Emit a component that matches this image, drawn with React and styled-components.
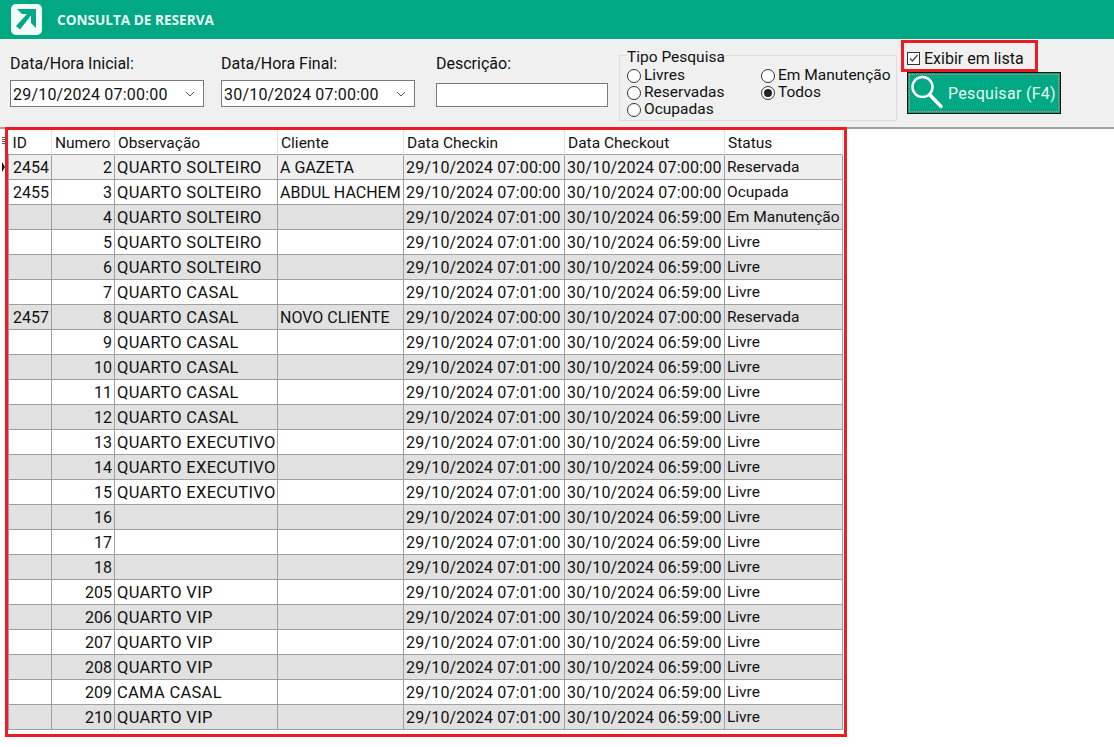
import React from "react";
import styled, { createGlobalStyle } from "styled-components";

const GlobalStyle = createGlobalStyle`
  html, body { margin: 0; padding: 0; background: #fff; }
  body { font-family: Roboto, "Open Sans", "Liberation Sans", sans-serif; font-size: 16px; color: #111; }
`;

const FREE_IN = "29/10/2024 07:01:00";
const FREE_OUT = "30/10/2024 06:59:00";
const IN = "29/10/2024 07:00:00";
const OUT = "30/10/2024 07:00:00";

const free = (numero, obs) => ({ id: "", numero, obs, cliente: "", checkin: FREE_IN, checkout: FREE_OUT, status: "Livre" });

const rooms = [
  { id: "2454", numero: 2, obs: "QUARTO SOLTEIRO", cliente: "A GAZETA", checkin: IN, checkout: OUT, status: "Reservada" },
  { id: "2455", numero: 3, obs: "QUARTO SOLTEIRO", cliente: "ABDUL HACHEM", checkin: IN, checkout: OUT, status: "Ocupada" },
  { ...free(4, "QUARTO SOLTEIRO"), status: "Em Manutenção" },
  free(5, "QUARTO SOLTEIRO"),
  free(6, "QUARTO SOLTEIRO"),
  free(7, "QUARTO CASAL"),
  { id: "2457", numero: 8, obs: "QUARTO CASAL", cliente: "NOVO CLIENTE", checkin: IN, checkout: OUT, status: "Reservada" },
  free(9, "QUARTO CASAL"),
  free(10, "QUARTO CASAL"),
  free(11, "QUARTO CASAL"),
  free(12, "QUARTO CASAL"),
  free(13, "QUARTO EXECUTIVO"),
  free(14, "QUARTO EXECUTIVO"),
  free(15, "QUARTO EXECUTIVO"),
  free(16, ""),
  free(17, ""),
  free(18, ""),
  free(205, "QUARTO VIP"),
  free(206, "QUARTO VIP"),
  free(207, "QUARTO VIP"),
  free(208, "QUARTO VIP"),
  free(209, "CAMA CASAL"),
  free(210, "QUARTO VIP"),
];

const Page = styled.div`
  width: 1114px;
  height: 747px;
  overflow: hidden;
  background: #fff;
`;

const TitleBar = styled.header`
  height: 39px;
  background: #00a884;
  display: flex;
  align-items: center;
  gap: 15px;
  padding-left: 11px;
`;

const Title = styled.h1`
  margin: 0;
  font-family: "Open Sans", sans-serif;
  font-size: 13.6px;
  font-weight: 700;
  color: #e8f8f3;
`;

const Toolbar = styled.section`
  height: 90px;
  box-sizing: border-box;
  background: #f0f0f0;
  border-bottom: 2px solid #a0a0a0;
  padding-left: 10px;
  display: flex;
  align-items: flex-start;
`;

const Field = styled.div`
  width: ${(p) => p.$width}px;
  margin-right: ${(p) => p.$gap}px;
  padding-top: 15px;
  display: flex;
  flex-direction: column;
`;

const Label = styled.label`
  line-height: 20px;
  margin-bottom: ${(p) => p.$gap}px;
`;

const DateBox = styled.div`
  height: 27px;
  box-sizing: border-box;
  background: #fff;
  border: 1px solid #7a7a7a;
  padding: 1px 8px 0 2px;
  letter-spacing: 0.2px;
  display: flex;
  align-items: center;
  justify-content: space-between;
`;

const TextBox = styled.div`
  height: 24px;
  box-sizing: border-box;
  background: #fff;
  border: 1px solid #7a7a7a;
`;

const GroupBox = styled.fieldset`
  width: 278px;
  height: 73px;
  box-sizing: border-box;
  margin: 9px 4px 0 1px;
  padding: 5px 0 0 7px;
  border: 1px solid #dcdcdc;
  display: grid;
  grid-template-columns: 134px 1fr;
  grid-auto-rows: 17px;
  font-size: 15.5px;
  line-height: 17px;
`;

const Legend = styled.legend`
  padding: 0;
  line-height: 14px;
  transform: translateY(2px);
`;

const Radio = styled.div`
  display: flex;
  align-items: center;
  gap: 3px;
  grid-column: ${(p) => p.$col};
  grid-row: ${(p) => p.$row};
`;

const RadioDot = styled.span`
  width: 14px;
  height: 14px;
  box-sizing: border-box;
  border: 1px solid #333;
  border-radius: 50%;
  background: #fff;
  display: flex;
  align-items: center;
  justify-content: center;
  &::after {
    content: "";
    width: 8px;
    height: 8px;
    border-radius: 50%;
    background: ${(p) => (p.$on ? "#222" : "transparent")};
  }
`;

const SideColumn = styled.div`
  width: 160px;
  display: flex;
  flex-direction: column;
  align-items: flex-start;
  padding-top: 1px;
`;

const ListToggle = styled.div`
  width: 137px;
  height: 32px;
  box-sizing: border-box;
  border: 3px solid #ed1c24;
  display: flex;
  align-items: center;
  gap: 4px;
  padding: 4px 0 0 3px;
`;

const CheckBox = styled.span`
  width: 13px;
  height: 13px;
  box-sizing: border-box;
  border: 1px solid #333;
  background: #fff;
  display: flex;
`;

const SearchButton = styled.button`
  width: 154px;
  height: 42px;
  margin-left: 6px;
  box-sizing: border-box;
  background: #00a884;
  border: 1px solid #111;
  padding: 0 0 0 2px;
  color: #e8f8f3;
  font-family: inherit;
  font-size: 16px;
  letter-spacing: 0.3px;
  white-space: nowrap;
  display: flex;
  align-items: center;
  gap: 2px;
  outline: 1px dotted #f07a8a;
  outline-offset: -3px;
`;

const TableFrame = styled.div`
  width: 842px;
  height: 610px;
  margin-top: -2px;
  margin-left: 5px;
  box-sizing: border-box;
  border: 3px solid #ed1c24;
  position: relative;
`;

const GridTable = styled.table`
  width: 834px;
  table-layout: fixed;
  border-collapse: collapse;
`;

const HeadCell = styled.th`
  height: 22px;
  padding: 2px 0 0 3px;
  font-size: 15.5px;
  line-height: 22px;
  font-weight: 400;
  text-align: left;
  white-space: nowrap;
  overflow: hidden;
  border-right: 1px solid #e3e3e3;
  &:first-child {
    padding-left: 4px;
  }
`;

const Row = styled.tr`
  background: ${(p) => p.$bg};
`;

const Cell = styled.td`
  height: 23px;
  padding: 1px 2px 0;
  line-height: 23px;
  text-align: ${(p) => (p.$right ? "right" : "left")};
  white-space: nowrap;
  overflow: hidden;
  border: 1px solid #a0a0a0;
  &:first-child {
    padding-left: 4px;
  }
`;

const RoomCell = styled(Cell)`
  font-size: 16.5px;
  letter-spacing: 0.3px;
`;

const DateCell = styled(Cell)`
  letter-spacing: 0.2px;
`;

const StatusCell = styled(Cell)`
  font-size: 15.5px;
`;

const RowMarker = styled.span`
  position: absolute;
  left: -6px;
  top: 32px;
  width: 0;
  height: 0;
  border-left: 3px solid #111;
  border-top: 5px solid transparent;
  border-bottom: 5px solid transparent;
`;

const CornerDots = styled.span`
  position: absolute;
  left: -6px;
  top: 7px;
  width: 3px;
  height: 7px;
  background: repeating-linear-gradient(to bottom, #555 0 1px, transparent 1px 2px);
`;

const Logo = () => (
  <svg width="31" height="31" viewBox="0 0 31 31">
    <rect width="31" height="31" rx="5" fill="#f2fbf8" />
    <path d="M6 5H25V24L20 19V11.5L9 25.5L5 22L16 10H11z" fill="#00a884" />
  </svg>
);

const Chevron = () => (
  <svg width="10" height="6" viewBox="0 0 10 6">
    <path d="M1 1l4 4 4-4" fill="none" stroke="#555" strokeWidth="1" />
  </svg>
);

const Tick = () => (
  <svg width="11" height="11" viewBox="0 0 11 11">
    <path d="M2 5.5l2.5 2.5 5-6" fill="none" stroke="#444" strokeWidth="1.2" />
  </svg>
);

const Magnifier = () => (
  <svg width="36" height="38" viewBox="0 0 36 38">
    <circle cx="12.5" cy="13" r="10" fill="none" stroke="#fff" strokeWidth="2.5" />
    <path d="M20 21l11 11.5" stroke="#fff" strokeWidth="3.5" strokeLinecap="round" />
  </svg>
);

const columns = [
  ["ID", 43],
  ["Numero", 63],
  ["Observação", 163],
  ["Cliente", 126],
  ["Data Checkin", 161],
  ["Data Checkout", 160],
  ["Status", 118],
];

export default function App() {
  return (
    <Page>
      <GlobalStyle />
      <TitleBar>
        <Logo />
        <Title>CONSULTA DE RESERVA</Title>
      </TitleBar>
      <Toolbar>
        <Field $width={194} $gap={17}>
          <Label $gap={6}>Data/Hora Inicial:</Label>
          <DateBox>29/10/2024 07:00:00<Chevron /></DateBox>
        </Field>
        <Field $width={194} $gap={21}>
          <Label $gap={6}>Data/Hora Final:</Label>
          <DateBox>30/10/2024 07:00:00<Chevron /></DateBox>
        </Field>
        <Field $width={172} $gap={10}>
          <Label $gap={9}>Descrição:</Label>
          <TextBox />
        </Field>
        <GroupBox>
          <Legend>Tipo Pesquisa</Legend>
          <Radio $col={1} $row={1}><RadioDot />Livres</Radio>
          <Radio $col={1} $row={2}><RadioDot />Reservadas</Radio>
          <Radio $col={1} $row={3}><RadioDot />Ocupadas</Radio>
          <Radio $col={2} $row={1}><RadioDot />Em Manutenção</Radio>
          <Radio $col={2} $row={2}><RadioDot $on />Todos</Radio>
        </GroupBox>
        <SideColumn>
          <ListToggle><CheckBox><Tick /></CheckBox>Exibir em lista</ListToggle>
          <SearchButton><Magnifier />Pesquisar (F4)</SearchButton>
        </SideColumn>
      </Toolbar>
      <TableFrame>
        <CornerDots />
        <RowMarker />
        <GridTable>
          <colgroup>
            {columns.map(([name, width]) => <col key={name} width={width} />)}
          </colgroup>
          <thead>
            <tr>
              {columns.map(([name]) => <HeadCell key={name}>{name}</HeadCell>)}
            </tr>
          </thead>
          <tbody>
            {rooms.map((r, i) => (
              <Row key={r.numero} $bg={i === 0 ? "#efefef" : i % 2 ? "#fff" : "#e1e1e1"}>
                <Cell>{r.id}</Cell>
                <Cell $right>{r.numero}</Cell>
                <RoomCell>{r.obs}</RoomCell>
                <Cell>{r.cliente}</Cell>
                <DateCell>{r.checkin}</DateCell>
                <DateCell>{r.checkout}</DateCell>
                <StatusCell>{r.status}</StatusCell>
              </Row>
            ))}
          </tbody>
        </GridTable>
      </TableFrame>
    </Page>
  );
}
